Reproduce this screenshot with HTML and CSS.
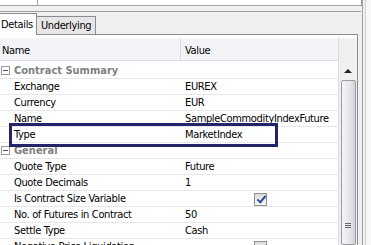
FILE: index.html
```html
<!DOCTYPE html>
<html lang="en">
<head>
    <meta charset="UTF-8">
    <title>Contract Properties</title>
    <link rel="stylesheet" href="styles.css">
</head>
<body>
    <div class="window">
        <div class="main">
            <div class="top-box">
                <div class="top-left"></div>
                <div class="top-right"></div>
            </div>
            <div class="splitter"></div>
            <div class="tabs">
                <div class="tab active">Details</div>
                <div class="tab">Underlying</div>
            </div>
            <div class="panel">
                <div class="grid-wrap">
                    <div class="grid">
                        <div class="grid-header">
                            <div class="col-name">Name</div>
                            <div class="col-value">Value</div>
                        </div>
                        <div class="rows">
                            <div class="row group"><span class="toggle"></span>Contract Summary</div>
                            <div class="row"><div class="col-name">Exchange</div><div class="col-value">EUREX</div></div>
                            <div class="row"><div class="col-name">Currency</div><div class="col-value">EUR</div></div>
                            <div class="row"><div class="col-name">Name</div><div class="col-value">SampleCommodityIndexFuture</div></div>
                            <div class="row"><div class="col-name">Type</div><div class="col-value">MarketIndex</div></div>
                            <div class="row group"><span class="toggle"></span>General</div>
                            <div class="row"><div class="col-name">Quote Type</div><div class="col-value">Future</div></div>
                            <div class="row"><div class="col-name">Quote Decimals</div><div class="col-value">1</div></div>
                            <div class="row"><div class="col-name">Is Contract Size Variable</div><div class="col-value"><span class="check on"></span></div></div>
                            <div class="row"><div class="col-name">No. of Futures in Contract</div><div class="col-value">50</div></div>
                            <div class="row"><div class="col-name">Settle Type</div><div class="col-value">Cash</div></div>
                            <div class="row"><div class="col-name">Negative Price Liquidation</div><div class="col-value"><span class="check"></span></div></div>
                        </div>
                        <div class="highlight"></div>
                    </div>
                    <div class="scrollbar">
                        <div class="scroll-corner"></div>
                        <div class="scroll-up"></div>
                        <div class="thumb"><span class="grip"></span></div>
                    </div>
                </div>
            </div>
        </div>
        <div class="right-strip"></div>
    </div>
</body>
</html>
```

FILE: styles.css
```css
/* General */
body {
    margin: 0;
    padding: 0;
    background-color: #f0f0f0;
    font-family: "DejaVu Sans Condensed", "Liberation Sans", Arial, sans-serif;
    font-size: 11px;
    letter-spacing: -0.35px;
    color: #000;
    overflow: hidden;
}

.window {
    display: flex;
    width: 371px;
    height: 245px;
    overflow: hidden;
}

.main {
    width: 362px;
    display: flex;
    flex-direction: column;
}

.main > div {
    flex-shrink: 0;
}

/* Top box */
.top-box {
    display: flex;
    height: 5px;
    border-bottom: 1px solid #a0a0a0;
    border-right: 1px solid #a0a0a0;
    background-color: #fff;
}

.top-left {
    width: 37px;
    border-right: 1px solid #a0a0a0;
}

.splitter {
    height: 5px;
    border-bottom: 1px solid #a0a0a0;
    margin-right: 1px;
}

/* Tabs */
.tabs {
    display: flex;
    align-items: flex-end;
    height: 22px;
}

.tab {
    height: 17px;
    line-height: 18px;
    padding: 0 4px;
    background-color: #e6e6e6;
    border: 1px solid #898c95;
    border-bottom: none;
    margin-left: -1px;
}

.tab.active {
    height: 21px;
    line-height: 21px;
    padding: 0 3px 0 1px;
    background-color: #fff;
    border-left: none;
    margin-left: 0;
    margin-bottom: -1px;
    position: relative;
    z-index: 1;
}

/* Panel */
.main > .panel {
    flex: 1 1 auto;
    min-height: 0;
    overflow: hidden;
    margin-right: 4px;
    border-top: 1px solid #898c95;
    border-right: 1px solid #898c95;
    background-color: #fff;
    padding-top: 3px;
}

.grid-wrap {
    display: flex;
    height: 100%;
}

.grid {
    width: 338px;
    position: relative;
}

.grid-header {
    display: flex;
    height: 22px;
    line-height: 26px;
    background-color: #f2f4f7;
    border-bottom: 1px solid #d9dce0;
}

.grid-header .col-name {
    width: 178px;
    padding-left: 2px;
    border-right: 1px solid #d9dce0;
}

.grid-header .col-value {
    padding-left: 4px;
}

.rows {
    margin-top: 2px;
}

.row {
    display: flex;
    height: 15px;
    line-height: 16px;
    border-bottom: 1px solid #e8e8e8;
}

.row .col-name {
    width: 171px;
    padding-left: 14px;
    white-space: nowrap;
}

.row .col-value {
    white-space: nowrap;
}

.row.group {
    align-items: center;
    font-weight: bold;
    letter-spacing: 0;
    color: #808080;
}

.toggle {
    width: 7px;
    height: 7px;
    margin: 0 4px 0 1px;
    border: 1px solid #9a9a9a;
    position: relative;
    background-color: #fff;
}

.toggle::after {
    content: "";
    position: absolute;
    left: 1px;
    top: 3px;
    width: 5px;
    height: 1px;
    background-color: #555;
}

/* Checkboxes */
.check {
    display: inline-block;
    width: 11px;
    height: 11px;
    margin: 2px 0 0 69px;
    border: 1px solid #8f8f8f;
    background: linear-gradient(#dcdcdc, #f7f7f7);
    position: relative;
    vertical-align: top;
}

.check.on::after {
    content: "";
    position: absolute;
    left: 4px;
    top: 0;
    width: 3px;
    height: 7px;
    border: solid #2b4d9a;
    border-width: 0 2px 2px 0;
    transform: rotate(40deg);
}

/* Highlight box */
.highlight {
    position: absolute;
    left: 9px;
    top: 85px;
    width: 263px;
    height: 18px;
    border: 3px solid #24246b;
}

/* Scrollbar */
.scrollbar {
    width: 18px;
    border-left: 1px solid #d9dce0;
    background-color: #f0f0f0;
    display: flex;
    flex-direction: column;
    align-items: center;
}

.scroll-corner {
    height: 23px;
    width: 100%;
    background-color: #f0f0f0;
}

.scroll-up {
    width: 0;
    height: 0;
    margin: 8px 0 6px;
    border-left: 4px solid transparent;
    border-right: 4px solid transparent;
    border-bottom: 4px solid #222;
}

.thumb {
    flex: 1;
    width: 13px;
    margin-top: 1px;
    border: 1px solid #9a9a9a;
    border-radius: 2px;
    background: linear-gradient(to right, #f4f5f7, #e3e6ea 60%, #cfd4da);
    display: flex;
    align-items: flex-end;
    justify-content: center;
}

.grip {
    width: 6px;
    height: 6px;
    margin-bottom: 15px;
    background: repeating-linear-gradient(#666 0 1px, transparent 1px 2px);
}

/* Right strip */
.right-strip {
    width: 9px;
    border-left: 1px solid #a0a0a0;
    background: linear-gradient(to right, #f0f0f0 0 2px, #d4d4d4 2px 3px, #f7f7f7 3px);
}
```
